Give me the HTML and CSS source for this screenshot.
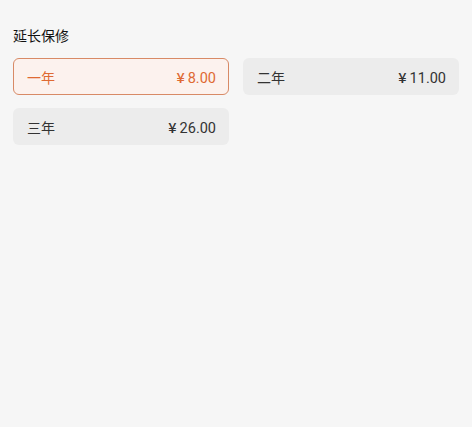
FILE: index.html
```html
<!DOCTYPE html>
<html lang="zh">
<head>
<meta charset="utf-8">
<link rel="stylesheet" href="styles.css">
</head>
<body>
<div class="page">
  <div class="title">延长保修</div>
  <div class="options">
    <div class="option selected"><span class="name">一年</span><span class="price"><span class="yen">¥</span>8.00</span></div>
    <div class="option"><span class="name">二年</span><span class="price"><span class="yen">¥</span>11.00</span></div>
    <div class="option"><span class="name">三年</span><span class="price"><span class="yen">¥</span>26.00</span></div>
  </div>
</div>
</body>
</html>
```
FILE: styles.css
```css
html, body {
  margin: 0;
  padding: 0;
  background: #f6f6f6;
}
.page {
  padding: 25px 13px 0 13px;
  font-family: "Noto Sans CJK SC", "Noto Sans", sans-serif;
}
.title {
  font-size: 14px;
  line-height: 20px;
  font-weight: 400;
  color: #111;
  margin-bottom: 13px;
}
.options {
  display: grid;
  grid-template-columns: 1fr 1fr;
  column-gap: 14px;
  row-gap: 13px;
}
.option {
  height: 37px;
  box-sizing: border-box;
  border-radius: 6px;
  background: #ececec;
  border: 1.5px solid transparent;
  display: flex;
  align-items: center;
  justify-content: space-between;
  padding: 0 12px 0 13px;
  font-size: 14px;
  color: #333;
}
.option.selected {
  background: #fcf2ee;
  border-color: #d88a66;
  color: #df6a33;
}
.price {
  font-family: Roboto, "Noto Sans", sans-serif;
  font-size: 14.5px;
}
.yen {
  font-family: "Noto Sans CJK SC", sans-serif;
  font-weight: 500;
  margin-right: 3px;
}
```
